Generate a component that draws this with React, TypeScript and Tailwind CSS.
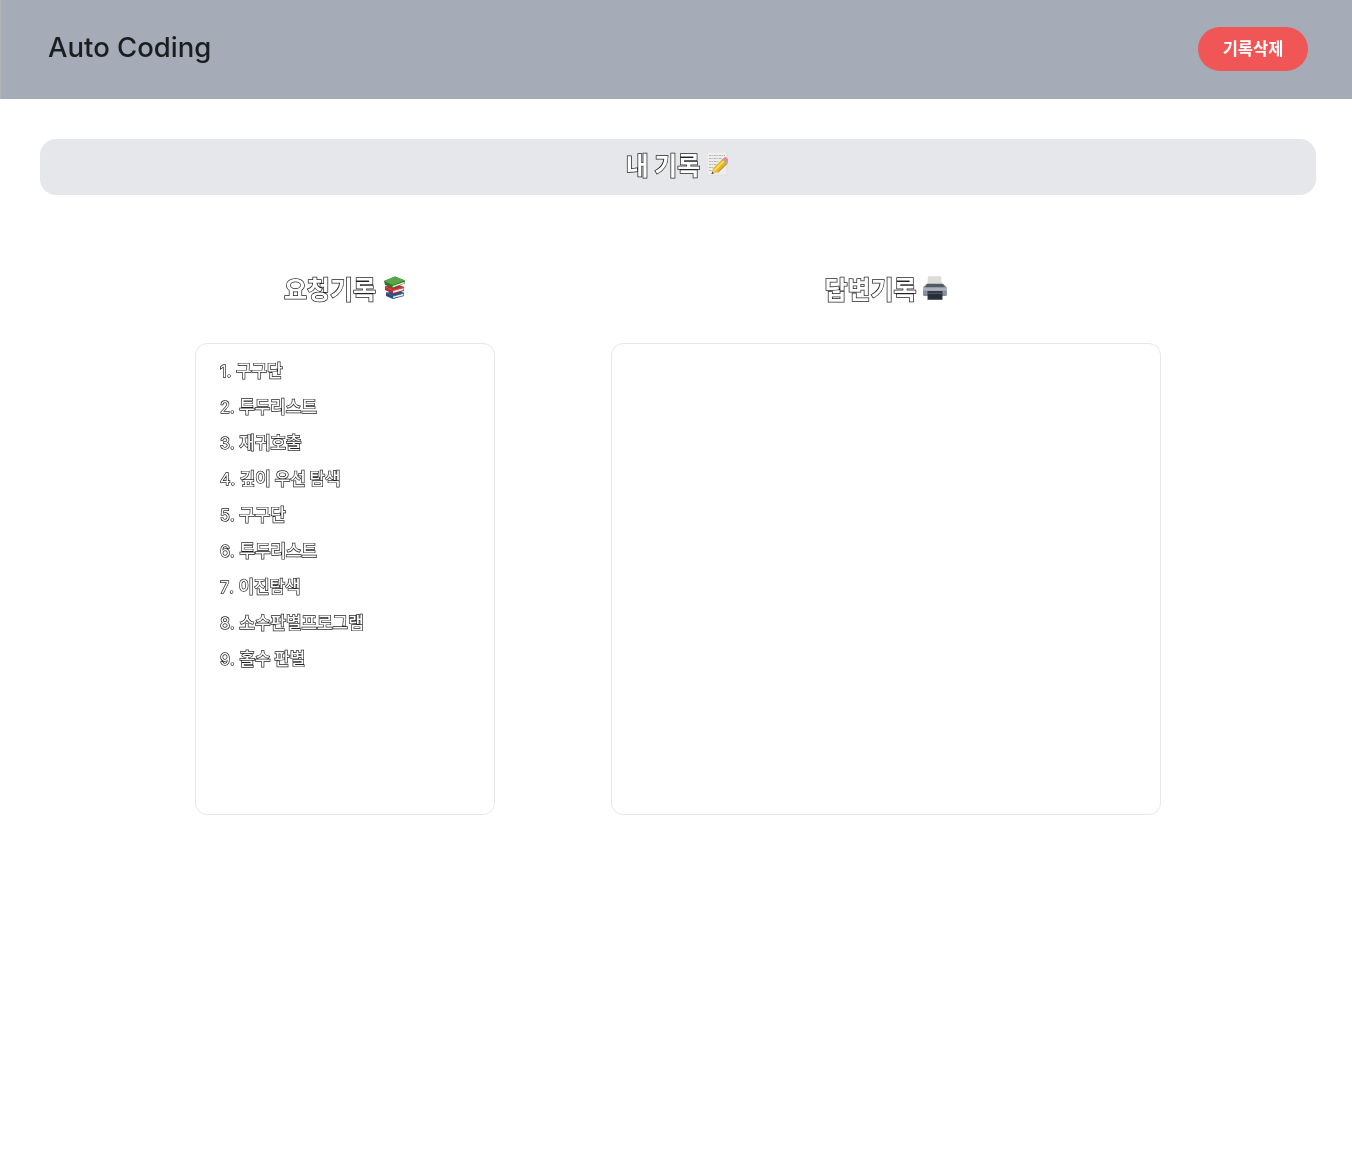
import React from "react";

const requests = [
  "구구단",
  "투두리스트",
  "재귀호출",
  "깊이 우선 탐색",
  "구구단",
  "투두리스트",
  "이진탐색",
  "소수판별프로그램",
  "홀수 판별",
];

function MemoIcon() {
  return (
    <svg className="h-6 w-[23px] shrink-0" viewBox="0 0 23 24" aria-hidden="true">
      <rect x="0" y="0" width="20" height="23" rx="1" fill="#eeeeed" stroke="#d8d8da" strokeWidth=".6" />
      <path d="M2 3.5h16M2 6.5h13M2 9.5h10M2 12.5h8M2 15.5h5M2 18.5h4" stroke="#b5b5b5" strokeWidth="1" strokeDasharray="2.5 .7 1.2 .6" />
      <path d="M4.5 22l1.7-5.7L15.5 7l5 4-9.3 9.2z" fill="#e5b324" />
      <path d="M7.5 18.3l9.6-9.5" stroke="#ffdc50" strokeWidth="2" />
      <path d="M11.2 20.2l9.3-9.2" stroke="#9a7423" strokeWidth=".9" />
      <path d="M15.5 7l1.7-1.6q1.2-.8 3 .6 1.4 1.5.9 3l-.6 2z" fill="#e58b91" />
      <path d="M15.2 7.3l4.8 4" stroke="#a8adb0" strokeWidth="1.2" />
      <path d="M4.5 22l1.7-5.7 1.7 2.8 3.3 1.1z" fill="#e7c88d" />
      <path d="M4.5 22l.8-2.3 1.6 1.5z" fill="#333" />
    </svg>
  );
}

function BooksIcon() {
  return (
    <svg className="h-6 w-[23px] shrink-0" viewBox="0 0 23 24" aria-hidden="true">
      <path d="M3 17l11-3 7 3v3L10 23l-7-3z" fill="#274d80" />
      <path d="M10 20.3l10.5-2.8v2L10 22z" fill="#e6e8ea" />
      <path d="M3 16.5l7 3.5 11-3" fill="none" stroke="#35659e" strokeWidth="1" />
      <path d="M2 10.5L14 8l7 3v4l-11 3-8-4z" fill="#b42e32" />
      <path d="M10 14.7l10.5-3v2.4L10 17z" fill="#eee" />
      <path d="M2 10.7l8 3.5 11-3" fill="none" stroke="#cf4040" strokeWidth="1.6" />
      <path d="M1 5L12 .5 22 4.5v3L9.5 12 2 9z" fill="#2f752b" />
      <path d="M1 5L12 .5 22 4.5 9.5 9z" fill="#58a746" />
      <path d="M9.6 9.9L21.5 5.7v1.6L9.6 11.4z" fill="#e8ece3" />
    </svg>
  );
}

function PrinterIcon() {
  return (
    <svg className="h-6 w-[25px] shrink-0" viewBox="0 0 25 24" aria-hidden="true">
      <path d="M5 1q0-.7.8-.7h11.5q.8 0 .8.7l1 9H4z" fill="#dedcd6" />
      <path d="M3.5 8h17l3.3 3.5v7.3q0 1.2-1.2 1.2H1.3Q0 20 0 18.8v-7.3z" fill="#848b98" />
      <path d="M4.3 7.8h15.4l2 3.5H2.2z" fill="#505966" />
      <path d="M0 11.5h23.8v3.3H0z" fill="#aab1be" />
      <path d="M0 15.7h23.8v2.2H0z" fill="#8a92a1" />
      <path d="M4.5 15h15v8.8h-15z" fill="#343b44" />
      <path d="M5.5 18h13v5h-13z" fill="#292f36" />
      <path d="M4.5 17.5h15" stroke="#4d5663" />
    </svg>
  );
}

const outlined =
  "whitespace-pre text-white [paint-order:stroke_fill] font-['Noto_Sans_CJK_KR',sans-serif]";

export default function App() {
  return (
    <div className="min-h-[1172px] bg-white font-['Noto_Sans_CJK_KR',sans-serif]">
      <header className="flex h-[99px] items-start justify-between border-l border-[#b2b4b7] bg-[#a5abb7] pt-[27px] pr-11 pl-[47px]">
        <h1 className="font-['Inter',sans-serif] text-[27.5px] leading-[41px] font-medium text-[#1b1e21] will-change-transform">
          Auto Coding
        </h1>
        <button className="h-11 w-[110px] rounded-full bg-[#f05656] pb-[2px] text-[16.5px] leading-[42px] font-bold text-white will-change-transform">
          기록삭제
        </button>
      </header>

      <main className="will-change-transform">
        <div className="mt-10 mr-9 ml-10 flex h-14 items-center justify-center gap-[7px] rounded-2xl bg-[#e5e7eb] pb-[6px]">
          <h2 className={`${outlined} text-[25px] leading-8 font-bold [-webkit-text-stroke:1.5px_#1f1f1f]`}>내 기록</h2>
          <MemoIcon />
        </div>

        <div className="mt-[75px] ml-[195px] flex gap-[116px]">
          <section className="w-[300px]">
            <div className="flex h-9 items-center justify-center gap-[7px]">
              <h3 className={`${outlined} text-[25px] leading-8 font-bold [-webkit-text-stroke:1.5px_#1f1f1f]`}>요청기록</h3>
              <BooksIcon />
            </div>
            <ol className="mt-[37px] h-[472px] rounded-xl border border-gray-200 pt-2 pl-6">
              {requests.map((request, index) => (
                <li
                  key={index}
                  className={`${outlined} h-9 text-[16.9px] leading-9 font-medium [-webkit-text-stroke:1.4px_#1f1f1f]`}
                >
                  <span className="font-['Inter',sans-serif] text-[16.3px] font-normal [font-kerning:none]">{index + 1}. </span>
                  {request}
                </li>
              ))}
            </ol>
          </section>

          <section className="w-[550px]">
            <div className="flex h-9 items-center justify-center gap-[6px]">
              <h3 className={`${outlined} text-[25px] leading-8 font-bold [-webkit-text-stroke:1.5px_#1f1f1f]`}>답변기록</h3>
              <PrinterIcon />
            </div>
            <div className="mt-[37px] h-[472px] rounded-xl border border-gray-200" />
          </section>
        </div>
      </main>
    </div>
  );
}
